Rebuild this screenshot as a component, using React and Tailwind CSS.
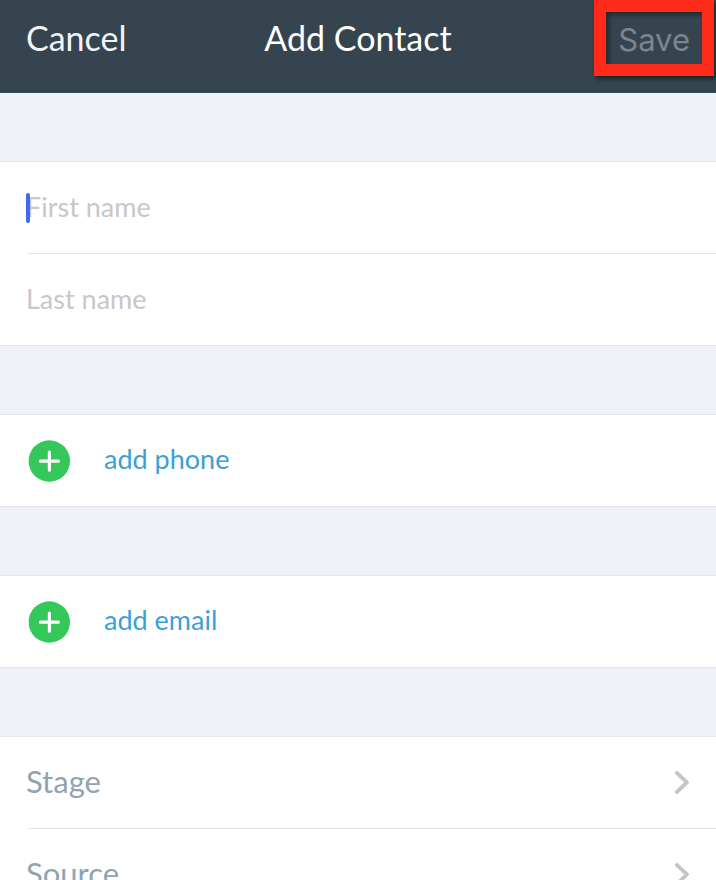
import { useState } from 'react';

const PlusIcon = () => (
    <svg className="size-[42px] shrink-0" viewBox="0 0 42 42" fill="none" aria-hidden="true">
        <circle cx="21.3" cy="21" r="20.7" fill="#34c759" />
        <path d="M21.4 12.2v18M12.4 21.2h18" stroke="#fff" strokeWidth="3.2" strokeLinecap="round" />
    </svg>
);

const ChevronIcon = () => (
    <svg className="h-6 w-4 shrink-0" viewBox="0 0 16 24" fill="none" aria-hidden="true">
        <path d="M2.8 2L13 11.4L2.8 21" stroke="#c4c5c7" strokeWidth="3.8" strokeLinecap="round" strokeLinejoin="round" />
    </svg>
);

const Section = ({ children }) => (
    <section className="mt-17 border-y border-[#e5e7ea] bg-white">{children}</section>
);

const NameField = ({ label, value, onChange, caret }) => (
    <div className="relative">
        {caret && !value && (
            <span className="absolute left-[26px] top-1/2 h-[30px] w-1 -translate-y-1/2 rounded-full bg-[#4169ee]" />
        )}
        <input
            type="text"
            aria-label={label}
            placeholder={label}
            value={value}
            onChange={(e) => onChange(e.target.value)}
            className="block h-[91px] w-full px-[26px] pb-0.5 text-[27px] text-[#35444e] outline-none placeholder:text-[#c7c7c9]"
        />
    </div>
);

const AddButton = ({ label }) => (
    <button type="button" className="flex h-[91px] w-full items-center gap-[34px] px-7 text-left text-[27px] text-[#3b9fd8]">
        <PlusIcon />
        <span className="pb-0.5">{label}</span>
    </button>
);

const LinkRow = ({ label }) => (
    <button type="button" className="flex h-[91px] w-full items-center justify-between px-[26px] text-left text-[31px] text-[#8fa3b2]">
        <span className="pb-0.5">{label}</span>
        <ChevronIcon />
    </button>
);

const Divider = () => <div className="ml-7 h-px bg-[#e4e4e6]" />;

const App = () => {
    const [firstName, setFirstName] = useState('');
    const [lastName, setLastName] = useState('');

    return (
        <div className="h-screen overflow-hidden bg-[#eff3f8] font-['Lato',sans-serif]">
            <header className="grid h-[93px] grid-cols-[1fr_auto_1fr] items-center border-b border-[#2d5064] bg-[#35444e] px-[26px] pb-4 text-[34px] leading-10 text-white">
                <button type="button" className="justify-self-start text-[#f0f3fa]">Cancel</button>
                <h1>Add Contact</h1>
                <button type="button" disabled className="relative justify-self-end pt-1 font-['Inter',sans-serif] text-[31px] text-[#7b868d]">
                    Save
                    <span className="absolute -inset-x-6 -inset-y-4 border-12 border-[#ff2b1a] shadow-[2px_3px_4px_rgba(0,0,0,0.5),inset_3px_3px_4px_rgba(0,0,0,0.4)]" />
                </button>
            </header>

            <main>
                <Section>
                    <NameField label="First name" value={firstName} onChange={setFirstName} caret />
                    <Divider />
                    <NameField label="Last name" value={lastName} onChange={setLastName} />
                </Section>
                <Section>
                    <AddButton label="add phone" />
                </Section>
                <Section>
                    <AddButton label="add email" />
                </Section>
                <Section>
                    <LinkRow label="Stage" />
                    <Divider />
                    <LinkRow label="Source" />
                </Section>
            </main>
        </div>
    );
};

export default App;
